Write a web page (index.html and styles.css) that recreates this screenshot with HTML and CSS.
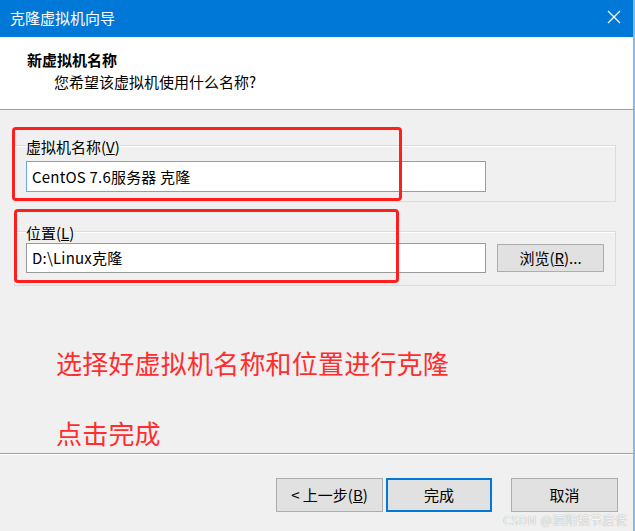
FILE: index.html
```html
<!DOCTYPE html>
<html lang="zh-CN">
<head>
<meta charset="utf-8">
<title>克隆虚拟机向导</title>
<link rel="stylesheet" href="styles.css">
</head>
<body>
<div class="window">
  <div class="titlebar">
    <span class="title">克隆虚拟机向导</span>
    <svg class="close" width="14" height="14" viewBox="0 0 14 14"><path d="M1 1 L13 13 M13 1 L1 13" stroke="#fff" stroke-width="1.3" fill="none"/></svg>
  </div>
  <div class="header">
    <div class="h-title">新虚拟机名称</div>
    <div class="h-sub">您希望该虚拟机使用什么名称?</div>
  </div>
  <div class="content">
    <fieldset class="group g1">
      <legend class="legend">虚拟机名称(<u>V</u>)</legend>
      <div class="input focused">CentOS 7.6服务器 克隆</div>
    </fieldset>
    <fieldset class="group g2">
      <legend class="legend">位置(<u>L</u>)</legend>
      <div class="row">
        <div class="input loc">D:\Linux克隆</div>
        <div class="btn browse">浏览(<u>R</u>)...</div>
      </div>
    </fieldset>
    <p class="note n1">选择好虚拟机名称和位置进行克隆</p>
    <p class="note n2">点击完成</p>
    <div class="mark m1"></div>
    <div class="mark m2"></div>
  </div>
  <div class="footer">
    <div class="btn back">&lt; 上一步(<u>B</u>)</div>
    <div class="btn finish">完成</div>
    <div class="btn cancel">取消</div>
    <span class="watermark">CSDN @酒阳镇节度使</span>
  </div>
</div>
</body>
</html>
```
FILE: styles.css
```css
* { box-sizing: border-box; }
html, body {
  margin: 0;
  padding: 0;
  width: 635px;
  height: 531px;
  overflow: hidden;
  background: #f0f0f0;
}
body {
  font-family: "Noto Sans CJK SC", "Noto Sans", sans-serif;
  font-size: 15px;
  color: #000;
}
.window {
  width: 635px;
  height: 531px;
  border-right: 2px solid #86b9e9;
  background: #f0f0f0;
  display: flex;
  flex-direction: column;
}
.titlebar {
  height: 37px;
  flex: none;
  background: #0078d7;
  display: flex;
  align-items: center;
  padding-left: 10px;
  padding-right: 10px;
}
.title {
  color: #fff;
  font-size: 15px;
  line-height: 20px;
  flex: 1;
  margin-top: -2px;
}
.close { flex: none; margin-top: -4px; margin-right: 2px; }
.header {
  height: 73px;
  flex: none;
  background: #fff;
  border-bottom: 1px solid #a0a0a0;
  padding-top: 13px;
}
.h-title {
  font-weight: bold;
  padding-left: 27px;
  line-height: 20px;
}
.h-sub {
  padding-left: 54px;
  line-height: 20px;
  margin-top: 2px;
}
.content {
  position: relative;
  height: 344px;
  flex: none;
  padding-top: 23px;
  border-bottom: 1px solid #a0a0a0;
}
.group {
  margin: 0 0 0 14px;
  width: 602px;
  border: 1px solid #dcdcdc;
  box-shadow: inset 1px 1px 0 #fff;
  padding: 0 11px 9px 11px;
  min-width: 0;
}
.g2 { margin-top: 17px; padding-bottom: 12px; }
.legend {
  padding: 4px 0 0 0;
  line-height: 20px;
  margin-left: 0;
}
.input {
  height: 31px;
  width: 460px;
  background: #fff;
  border: 1px solid #9a9a9a;
  padding-left: 5px;
  line-height: 29px;
  white-space: nowrap;
  letter-spacing: 0.2px;
}
.g1 .input { margin-top: 4px; }
.input.focused { border-color: #6aa8e4; }
.row {
  display: flex;
  align-items: center;
  gap: 11px;
}
.input.loc { height: 30px; line-height: 28px; }
.btn {
  background: #e1e1e1;
  border: 1px solid #adadad;
  display: flex;
  align-items: center;
  justify-content: center;
  line-height: 20px;
  white-space: nowrap;
}
.browse { width: 107px; height: 28px; }
.note {
  margin: 0;
  padding-left: 56px;
  color: #ff2d2d;
  font-size: 26px;
  line-height: 36px;
  letter-spacing: 0.2px;
}
.n1 { margin-top: 59px; }
.n2 { margin-top: 34px; }
.mark {
  position: absolute;
  border: 3px solid #ff1f1f;
  border-radius: 4px;
}
.m1 { left: 12px; top: 17px; width: 390px; height: 74px; }
.m2 { left: 14px; top: 99px; width: 385px; height: 74px; }
.footer {
  position: relative;
  flex: 1;
  border-top: 1px solid #fff;
  display: flex;
  justify-content: flex-end;
  align-items: flex-start;
  padding-top: 23px;
  padding-right: 15px;
}
.footer .btn { height: 34px; }
.back { width: 107px; margin-right: 3px; }
.finish { width: 106px; border: 2px solid #0078d7; margin-right: 19px; }
.cancel { width: 107px; }
.watermark {
  position: absolute;
  right: 5px;
  bottom: 3px;
  font-size: 12px;
  line-height: 16px;
  color: #f8f8f8;
  text-shadow: 0 0 1px #8c8c8c;
  letter-spacing: 0.6px;
}
```
